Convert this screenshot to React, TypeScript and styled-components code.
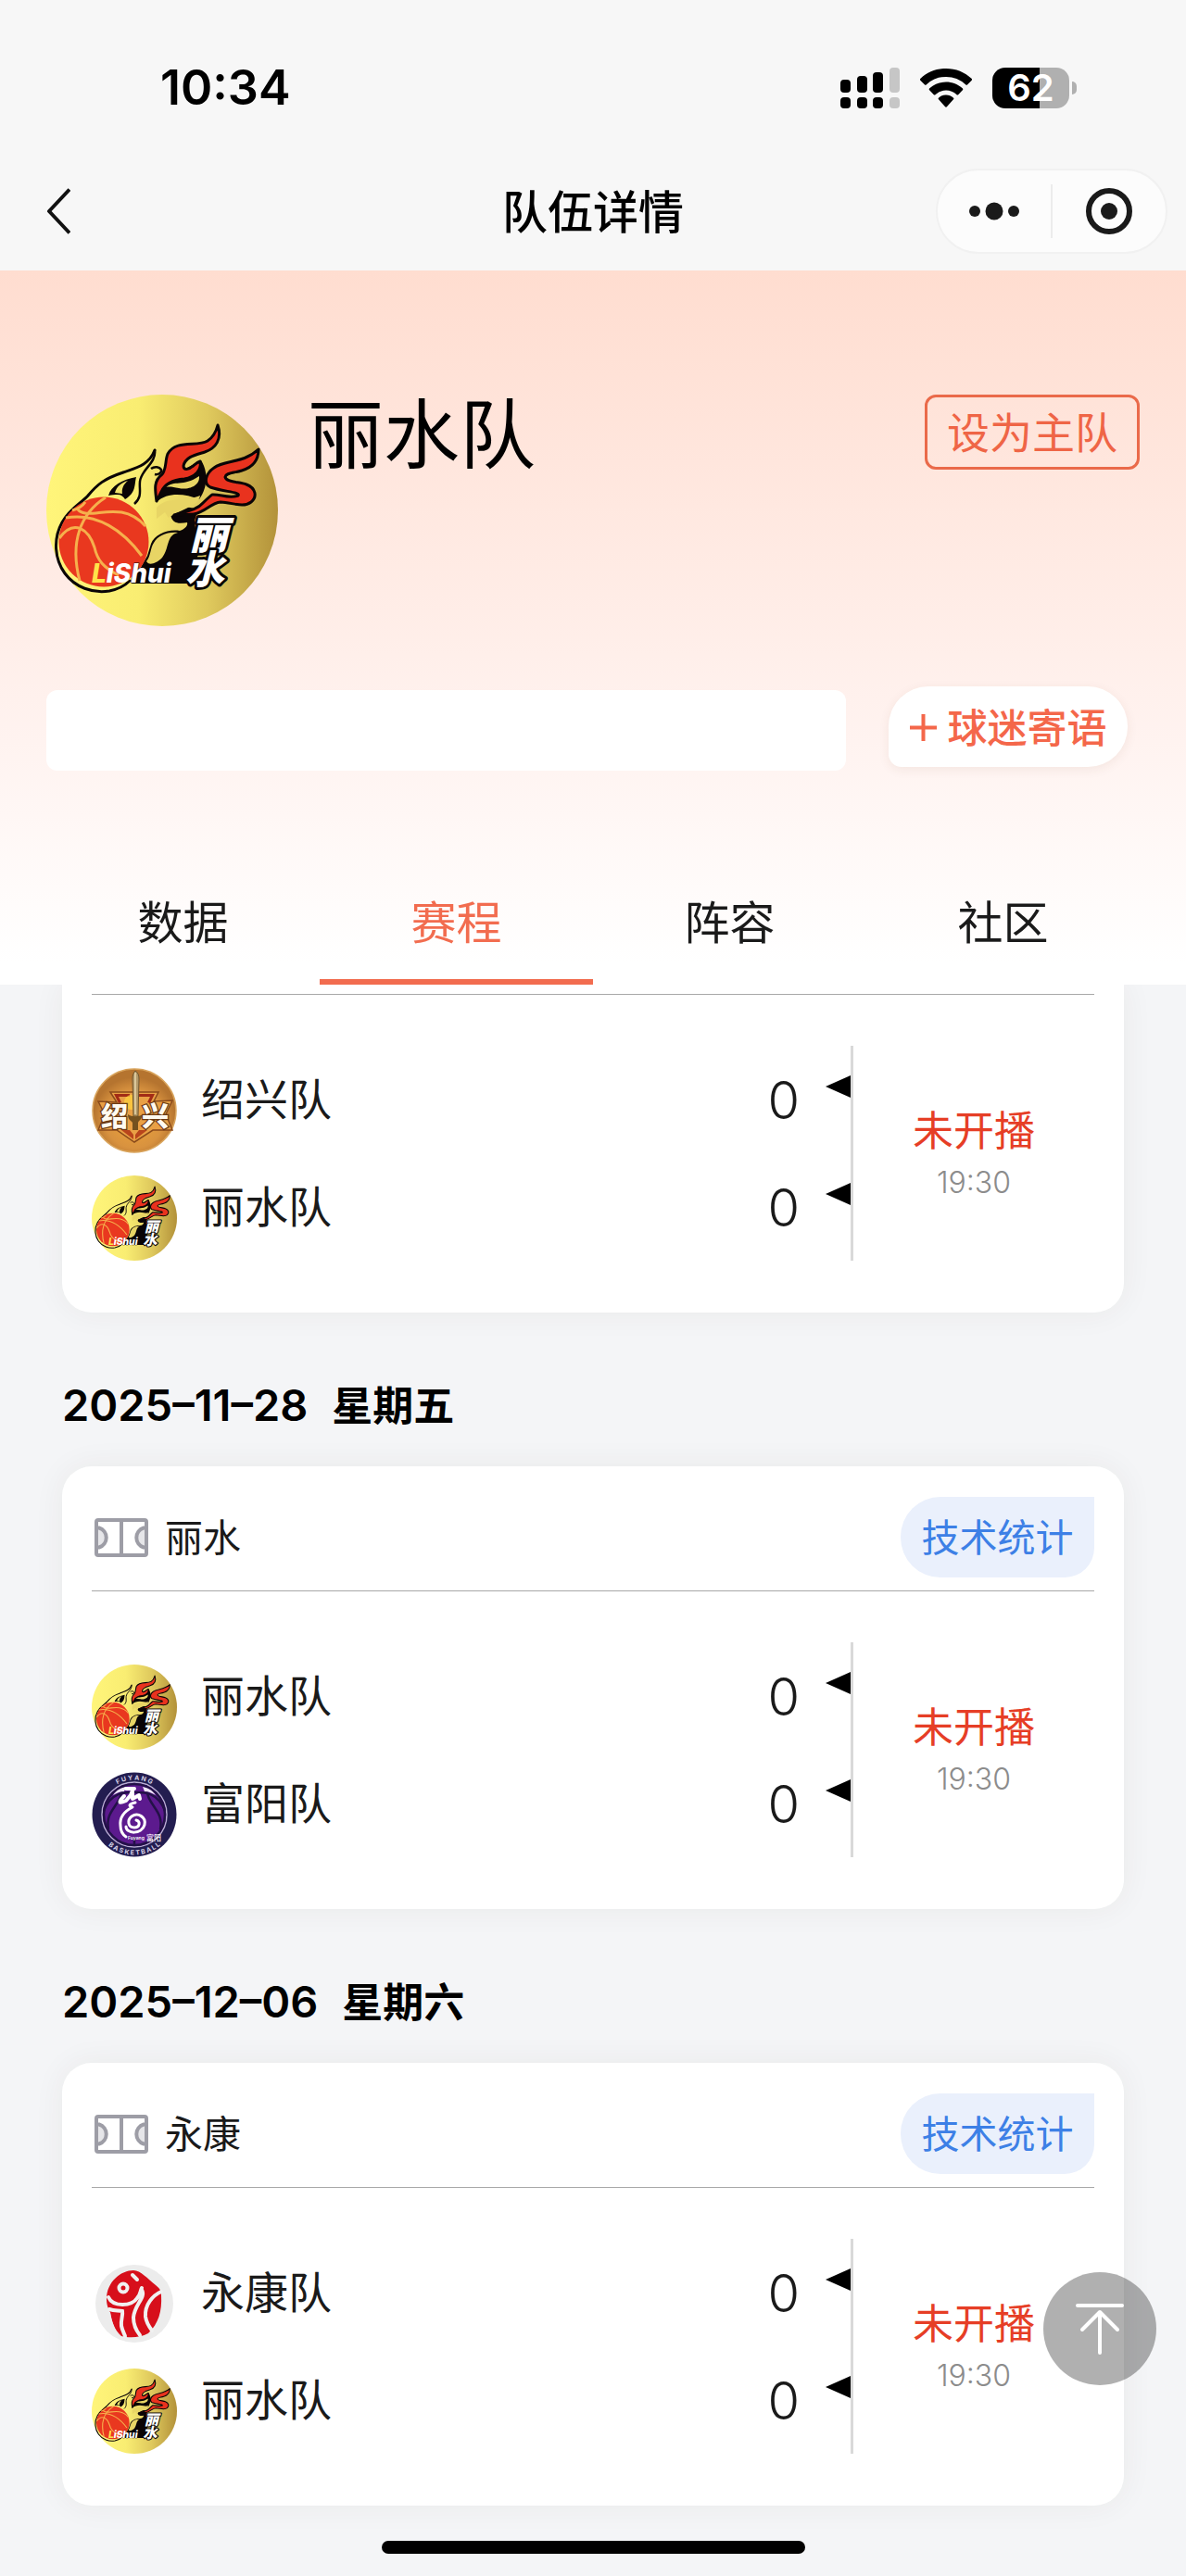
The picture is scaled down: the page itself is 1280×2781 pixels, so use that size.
import React, { useId } from "react";
import styled, { createGlobalStyle } from "styled-components";

const GlobalStyle = createGlobalStyle`
  * { box-sizing: border-box; }
  body {
    margin: 0;
    background: #f4f5f7;
    color: #1a1a1a;
    font-family: Inter, "Noto Sans CJK SC", "Liberation Sans", sans-serif;
  }
  button, input { font: inherit; color: inherit; border: 0; margin: 0; padding: 0; background: none; }
  button { cursor: pointer; }
  a { color: inherit; text-decoration: none; }
  h1, h2, p { margin: 0; }
  svg { display: block; }
`;

const Page = styled.div`
  display: flex;
  flex-direction: column;
  min-height: 100vh;
`;

/* ---------- status bar and title bar ---------- */

const TopChrome = styled.header`
  background: #f7f7f7;
`;

const StatusBar = styled.div`
  display: flex;
  align-items: center;
  justify-content: space-between;
  height: 164px;
  padding: 26px 118px 0 173px;
`;

const Clock = styled.time`
  font-size: 52px;
  line-height: 64px;
  font-weight: 600;
  color: #000;
`;

const StatusIcons = styled.div`
  display: flex;
  align-items: center;
`;

const WifiWrap = styled.div`
  margin: 0 22px;
`;

const Battery = styled.div`
  display: flex;
  align-items: center;
  gap: 3px;
`;

const BatteryBody = styled.div`
  display: flex;
  align-items: center;
  justify-content: center;
  width: 83px;
  height: 44px;
  border-radius: 14px;
  background: linear-gradient(90deg, #000 62%, #b0b0b0 62%);
  color: #fff;
  font-size: 40px;
  line-height: 44px;
  font-weight: 600;
`;

const BatteryNub = styled.div`
  width: 5px;
  height: 14px;
  border-radius: 0 5px 5px 0;
  background: #b0b0b0;
`;

const TitleBar = styled.div`
  display: grid;
  grid-template-columns: 1fr auto 1fr;
  align-items: center;
  height: 128px;
  padding: 0 20px;
`;

const BackButton = styled.button`
  justify-self: start;
  padding: 10px 30px;
`;

const Title = styled.h1`
  padding-top: 3px;
  font-size: 49px;
  line-height: 64px;
  font-weight: 500;
  color: #000;
`;

const Capsule = styled.div`
  justify-self: end;
  display: flex;
  align-items: center;
  width: 250px;
  height: 92px;
  border: 2px solid #f1f1f1;
  border-radius: 46px;
  background: #fcfcfc;
`;

const CapsuleButton = styled.button`
  flex: 1;
  display: flex;
  align-items: center;
  justify-content: center;
  height: 100%;
`;

const CapsuleDivider = styled.span`
  width: 2px;
  height: 58px;
  background: #ececec;
`;

/* ---------- team header ---------- */

const Hero = styled.section`
  padding: 134px 50px 0;
  background: linear-gradient(180deg, #ffddd0 0%, #fff3f0 66%, #ffffff 97%);
`;

const TeamRow = styled.div`
  display: flex;
  align-items: flex-start;
`;

const TeamName = styled.h2`
  flex: 1;
  margin-left: 32px;
  font-size: 82px;
  line-height: 88px;
  font-weight: 400;
  color: #000;
`;

const HomeTeamButton = styled.button`
  padding: 0 21px;
  height: 81px;
  border: 3px solid #ea6a4a;
  border-radius: 12px;
  color: #ef6546;
  font-size: 46px;
  line-height: 68px;
`;

const WishRow = styled.div`
  display: flex;
  align-items: flex-start;
  gap: 46px;
  margin-top: 65px;
  padding-right: 13px;
`;

const WishInput = styled.input`
  flex: 1;
  min-width: 0;
  height: 87px;
  margin-top: 4px;
  padding: 0 32px;
  border-radius: 12px;
  background: #fff;
  font-size: 41px;
  outline: none;
`;

const WishButton = styled.button`
  display: flex;
  align-items: center;
  justify-content: center;
  gap: 12px;
  width: 258px;
  height: 87px;
  padding-top: 2px;
  border-radius: 43px 43px 43px 14px;
  background: #fff;
  box-shadow: 0 3px 12px rgba(120, 60, 40, 0.08);
  color: #f4674a;
  font-size: 43px;
  line-height: 60px;
  font-weight: 500;
`;

const Tabs = styled.nav`
  display: flex;
  margin-top: 95px;
`;

const Tab = styled.a<{ $active: boolean }>`
  flex: 1;
  display: flex;
  align-items: center;
  justify-content: center;
  height: 136px;
  padding-top: 3px;
  font-size: 49px;
  line-height: 64px;
  color: ${(p) => (p.$active ? "#f26c4f" : "#1a1a1a")};
  box-shadow: ${(p) => (p.$active ? "inset 0 -6px 0 #f26c4f" : "none")};
`;

/* ---------- schedule ---------- */

const Schedule = styled.main`
  display: flex;
  flex-direction: column;
  padding: 0 67px;
`;

const DateHeading = styled.h2`
  display: flex;
  align-items: baseline;
  gap: 26px;
  height: 166px;
  padding-top: 68px;
  font-size: 44px;
  line-height: 64px;
  font-weight: 600;
  color: #000;
`;

const DateText = styled.span`
  font-size: 47px;
`;

const Card = styled.article<{ $cut?: boolean }>`
  padding: ${(p) => (p.$cut ? "10px 32px 0" : "33px 32px 0")};
  border-radius: ${(p) => (p.$cut ? "0 0 32px 32px" : "32px")};
  background: #fff;
  box-shadow: 0 0 34px rgba(60, 50, 40, 0.06);
  clip-path: ${(p) => (p.$cut ? "inset(0 -60px -60px)" : "none")};
`;

const CardHead = styled.div`
  display: flex;
  align-items: center;
  justify-content: space-between;
  padding-bottom: 14px;
`;

const Venue = styled.div`
  display: flex;
  align-items: center;
  gap: 18px;
  padding-left: 3px;
  font-size: 41px;
  line-height: 60px;
`;

const StatsLink = styled.a`
  display: flex;
  align-items: center;
  justify-content: center;
  width: 209px;
  height: 87px;
  border-radius: 43px 0 32px 43px;
  background: #eaf0fc;
  color: #3d80e6;
  font-size: 41px;
  line-height: 60px;
`;

const MatchBody = styled.div`
  display: flex;
  padding: 55px 0 56px;
  border-top: 1px solid #a8a8a8;
`;

const Teams = styled.div`
  flex: 1;
`;

const TeamLine = styled.div`
  display: flex;
  align-items: center;
  height: 116px;
`;

const LogoSlot = styled.div`
  align-self: flex-end;
`;

const Name = styled.span`
  flex: 1;
  margin-left: 26px;
  font-size: 47px;
  line-height: 60px;
`;

const Score = styled.span`
  padding-top: 2px;
  font-size: 56px;
  line-height: 64px;
  font-weight: 300;
`;

const Arrow = styled.span`
  align-self: flex-start;
  margin: 32px 0 0 28px;
  border: solid transparent;
  border-width: 12px 27px 12px 0;
  border-right-color: #000;
`;

const StatusColumn = styled.div`
  display: flex;
  flex-direction: column;
  align-items: center;
  justify-content: center;
  width: 263px;
  padding-top: 4px;
  border-left: 3px solid #d9d9d9;
`;

const LiveState = styled.span`
  font-size: 44px;
  line-height: 60px;
  color: #e63e26;
`;

const StartTime = styled.time`
  font-size: 32px;
  line-height: 52px;
  font-weight: 300;
  color: #8c8c8c;
`;

const BackToTop = styled.button`
  position: fixed;
  right: 32px;
  bottom: 206px;
  display: flex;
  align-items: center;
  justify-content: center;
  width: 122px;
  height: 122px;
  border-radius: 50%;
  background: rgba(0, 0, 0, 0.31);
`;

const HomeIndicator = styled.div`
  align-self: center;
  width: 457px;
  height: 14px;
  margin: 38px 0 24px;
  border-radius: 7px;
  background: #000;
`;

/* ---------- drawings ---------- */

const SignalIcon = () => (
  <svg width="64" height="44" viewBox="0 0 64 44" aria-hidden="true">
    {[
      [0, 13],
      [18, 9],
      [35, 5],
      [53, 0],
    ].map(([x, y], i) => (
      <g key={x} fill={i === 3 ? "#c6c6c6" : "#000"}>
        <rect x={x} y={y} width="11" height={27 - y} rx="4" />
        <rect x={x} y="32" width="11" height="12" rx="4" />
      </g>
    ))}
  </svg>
);

const WifiIcon = () => (
  <svg width="56" height="42" viewBox="0 0 56 42" aria-hidden="true">
    <path d="M28 0C38.500 0 48.500 4 55.500 10.800a1.500 1.500 0 0 1 0 2.200l-4.300 4.300a1.500 1.500 0 0 1-2.100 0A30.500 30.500 0 0 0 28 9 30.500 30.500 0 0 0 6.900 17.300a1.500 1.500 0 0 1-2.100 0L.5 13a1.500 1.500 0 0 1 0-2.200C7.500 4 17.500 0 28 0Z" />
    <path d="M28 14.500c6.700 0 13 2.500 17.700 6.800a1.500 1.500 0 0 1 0 2.200L41.400 28a1.500 1.500 0 0 1-2.100 0A16.800 16.800 0 0 0 28 23.500 16.800 16.800 0 0 0 16.700 28a1.500 1.500 0 0 1-2.100 0l-4.300-4.500a1.500 1.500 0 0 1 0-2.200A26.300 26.300 0 0 1 28 14.500Z" />
    <path d="M28 28.500c3 0 5.700 1 7.800 2.900a1.500 1.500 0 0 1 0 2.200l-6.700 7.500a1.500 1.500 0 0 1-2.200 0l-6.700-7.500a1.500 1.500 0 0 1 0-2.200A11.600 11.600 0 0 1 28 28.500Z" />
  </svg>
);

const ChevronIcon = () => (
  <svg width="26" height="50" viewBox="0 0 26 50" fill="none" stroke="#111" strokeWidth="4" aria-hidden="true">
    <path d="M25 1.500 3 25l22 23.500" strokeLinejoin="round" />
  </svg>
);

const DotsIcon = () => (
  <svg width="54" height="20" viewBox="0 0 54 20" fill="#1a1a1a" aria-hidden="true">
    <circle cx="6" cy="10" r="6" />
    <circle cx="27" cy="10" r="9.500" />
    <circle cx="48" cy="10" r="6" />
  </svg>
);

const TargetIcon = () => (
  <svg width="50" height="50" viewBox="0 0 50 50" aria-hidden="true">
    <circle cx="25" cy="25" r="22" fill="none" stroke="#1a1a1a" strokeWidth="6" />
    <circle cx="25" cy="25" r="9" fill="#1a1a1a" />
  </svg>
);

const PlusIcon = () => (
  <svg width="29" height="29" viewBox="0 0 29 29" stroke="currentColor" strokeWidth="4" aria-hidden="true">
    <path d="M14.500 0v29M0 14.500h29" />
  </svg>
);

const CourtIcon = () => (
  <svg width="58" height="42" viewBox="0 0 58 42" fill="none" stroke="#9d9da6" strokeWidth="4" aria-hidden="true">
    <path d="M2 10.500h3a11 11 0 0 1 0 21H2ZM56 10.500h-3a11 11 0 0 0 0 21h3Z" fill="#e6e6e9" />
    <rect x="2" y="2" width="54" height="38" rx="2" />
    <path d="M29 2v38" />
  </svg>
);

const TopArrowIcon = () => (
  <svg width="52" height="56" viewBox="0 0 52 56" fill="none" stroke="#fff" strokeWidth="4" strokeLinecap="round" strokeLinejoin="round" aria-hidden="true">
    <path d="M2 3h48M26 54V11M7 29l19-19 19 19" />
  </svg>
);

type LogoProps = { size: number };

const LishuiLogo = ({ size }: LogoProps) => {
  const id = useId();
  return (
    <svg width={size} height={size} viewBox="0 0 250 250" role="img" aria-label="丽水队队徽">
      <defs>
        <linearGradient id={id}>
          <stop offset="0" stopColor="#fff57a" />
          <stop offset="0.400" stopColor="#f9ed72" />
          <stop offset="0.700" stopColor="#dfc95d" />
          <stop offset="1" stopColor="#b3923a" />
        </linearGradient>
      </defs>
      <circle cx="125" cy="125" r="125" fill={`url(#${id})`} />
      <path d="M134 128c3-8 16-8 30-4l-4 12 4 34-6 34H92l17-30 4-13c4-10 18-16 31-14 6-2 9-6 8-9-7 1-17 3-18-10Z" fill="#0a0506" />
      <path d="M142 149c-13 3-9 17-17 27-8 8-15 8-17 4 5-6 4-14 8-20 5-8 14-12 26-11Z" fill="#e8d565" />
      <path d="M117 60c-6 16-20 19-34 24-21 7-28 13-38 25-8 9-19 13-28 29-10 18-8 40 3 55 11 15 30 22 48 19 10-2 17-6 22-11" fill="none" stroke="#0a0506" strokeWidth="3" strokeLinecap="round" />
      <path d="M117 60c2 14-15 21-16 34-1 9 3 16-6 24M113 80c4-3 9-2 11 1 1 3-3 6-7 5" fill="none" stroke="#0a0506" strokeWidth="2.500" />
      <path d="M67 109c3-11 15-17 30-20-2 8 0 17-12 24-2-3-4-5-8-5-4 0-6 0-10 1Z" fill="#0a0506" />
      <path d="M74 106c2-7 7-11 14-13-5 4-7 9-6 14Z" fill="#f1e36b" />
      <path d="M119 116c-1-17 5-24 12-26l36-19c8 12 7 30-2 42-16-6-34-8-46 3Z" fill="#0a0506" />
      <path d="M129 100c9-8 18 0 36-12 1 12-14 15-22 13-6-1-10-2-14-1Zm-10 22c12-13 28-5 47-13-2 12-20 14-34 24l-4-6-9 7Z" fill="#e8d565" />
      <g fill="#e9321e" stroke="#0a0506" strokeWidth="3" strokeLinejoin="round">
        <path d="M185 33c5 15-2 25-14 29-10 3-21 5-23 15 0 5 6 4 9 1 3-2 5-5 9-6 2 10-6 17-17 19-14 1-22 7-25 14l-5 10c-2-14-3-22 6-29 5-6 3-15 6-22 9-16 32-7 43-14 6-4 9-9 11-17Z" />
        <path d="M229 59c0 13-8 20-18 23-9 3-17 2-18 7 1 6 16 5 23 8 10 4 12 13 5 19-9 7-21 0-33 0-11 1-16 11-29 13-7 1-14 0-21 1 13-4 24-5 31-13 5-5 8-8 10-9 8-1 18 5 28 1 3-4-16-4-30-9-8-4-5-15 4-21 12-9 31-4 48-20Z" />
      </g>
      <circle cx="62" cy="159" r="48.500" fill="#e9381f" />
      <g fill="none" stroke="#f6b04c" strokeWidth="3">
        <path d="M14 155c16-22 32-9 38 10 3 14 10 22 26 30M64 111c-27 17-39 48-28 90M21 133c34-6 62 14 82 41M34 124c12 14 45-13 73 18M28 125c8-2 12-6 14-9" />
      </g>
      <text
        fontFamily='"Noto Sans CJK SC", sans-serif'
        fontWeight="900"
        fontSize="42"
        fontStyle="italic"
        fill="#fff"
        stroke="#0a0506"
        strokeWidth="6"
        strokeLinejoin="round"
        paintOrder="stroke"
      >
        <tspan x="154" y="167">丽</tspan>
        <tspan x="150" y="204">水</tspan>
      </text>
      <text x="49" y="203" fontSize="28" fontWeight="800" fontStyle="italic" fontFamily="Inter, sans-serif" fill="#fff" stroke="#0a0506" strokeWidth="1" paintOrder="stroke">
        <tspan fill="#ffe34a" stroke="none">L</tspan>
        <tspan stroke="none">iS</tspan>
        <tspan>hui</tspan>
      </text>
    </svg>
  );
};

const ShaoxingLogo = ({ size }: LogoProps) => {
  const id = useId();
  return (
    <svg width={size} height={size} viewBox="0 0 92 92" role="img" aria-label="绍兴队队徽">
      <defs>
        <radialGradient id={id} cx="0.500" cy="0.600">
          <stop offset="0" stopColor="#f0a63a" />
          <stop offset="0.700" stopColor="#d8923f" />
          <stop offset="1" stopColor="#b5742f" />
        </radialGradient>
      </defs>
      <circle cx="46" cy="46" r="45" fill={`url(#${id})`} stroke="#d9a45c" strokeWidth="1.500" />
      <path d="M20 26h52l-5 10 20-1-7 15 7 17H66L46 80 27 67H7l7-17-7-14 20 1Z" fill="#e9a045" stroke="#8a4a1b" strokeWidth="1.500" />
      <path d="M24 28h17v3H29l3 6-3 1ZM68 28H51v3h12l-3 6 3 1Z" fill="#a32c16" />
      <path d="M32 67h9l4 5v5ZM60 67h-9l-4 5v5Z" fill="#b9451c" />
      <circle cx="43" cy="37" r="8" fill="#ffd33d" opacity="0.700" />
      <path d="M44 12c0-4 1-7 3-9 3 2 4 5 4 9l-1 40h-5Z" fill="#b49a6a" stroke="#6f5630" strokeWidth="1" />
      <path d="M47 5v45" stroke="#e7d7ad" strokeWidth="1.500" />
      <path d="M39 50c4 3 12 3 16 0-1 6-4 6-5 9v8h-6v-8c-2-3-5-3-5-9Z" fill="#74511f" />
      <g fontFamily='"Noto Sans CJK SC", sans-serif' fontWeight="900" fontSize="29" fill="#fffaf0" stroke="#6b3a14" strokeWidth="2.500" paintOrder="stroke">
        <text x="10" y="63">绍</text>
        <text x="54" y="63">兴</text>
      </g>
    </svg>
  );
};

const FuyangLogo = ({ size }: LogoProps) => {
  const id = useId();
  return (
    <svg width={size} height={size} viewBox="0 0 92 92" role="img" aria-label="富阳队队徽">
      <defs>
        <path id={`${id}t`} d="M8.500 46a37.500 37.500 0 0 1 75 0" />
        <path id={`${id}b`} d="M2.500 46a43.500 43.500 0 0 0 87 0" />
      </defs>
      <circle cx="46" cy="46" r="45.500" fill="#231d50" />
      <circle cx="46" cy="46" r="35" fill="#5c1a8e" stroke="#b8aed2" strokeWidth="1.500" />
      <g fill="none" stroke="#231148" strokeWidth="2.500">
        <circle cx="46" cy="46" r="33" />
        <path d="M13 42c8-22 25-20 33-20s25-2 33 20M34 14c-2 24-20 26-16 48M58 14c2 24 20 26 16 48M46 70v10" />
      </g>
      <path d="M23 25c4-6 9-8 14-9l-2 5c-5 0-8 2-12 4ZM69 25c-4-6-9-8-14-9l2 5c5 0 8 2 12 4Z" fill="#efe6f7" />
      <g fill="none" stroke="#fff" strokeLinecap="round" strokeLinejoin="round">
        <path d="M37 18h9M35 26c-8 8-5 8 2 5l5-6 2-5v9l7-4 1 4" strokeWidth="4" />
        <path d="M47 33c-8 2-7 4-3 5-10 5-14 12-13 20 0 7 3 10 6 12M37 59c0 8 17 9 20-2 2-8-7-14-14-9-5 4-4 12 3 12 6 0 7-7 2-8" strokeWidth="3" />
      </g>
      <text x="39" y="73" fontSize="5" fontWeight="600" fill="#fff" fontFamily="Inter, sans-serif">Fuyang</text>
      <text x="59" y="74" fontSize="8" fontWeight="500" fill="#fff" fontFamily='"Noto Sans CJK SC", sans-serif'>富阳</text>
      <g fill="#d8d3e8" fontFamily="Inter, sans-serif" fontWeight="700" fontSize="7" textAnchor="middle">
        <text>
          <textPath href={`#${id}t`} startOffset="50%">F U Y A N G</textPath>
        </text>
        <text>
          <textPath href={`#${id}b`} startOffset="50%">B A S K E T B A L L</textPath>
        </text>
      </g>
    </svg>
  );
};

const YongkangLogo = ({ size }: LogoProps) => (
  <svg width={size} height={size} viewBox="0 0 92 92" role="img" aria-label="永康队队徽">
    <circle cx="46" cy="46" r="42" fill="#ececec" />
    <path d="M45 10c8 0 15 9 24 16 5 4 6 6 6 11 1 17-3 31-14 41-9 5-21 5-29 3-8-7-10-16-12-25-2-5-4-8-4-15C16 22 32 10 45 10Z" fill="#d70f1b" />
    <g fill="none" stroke="#f1f1f1" strokeWidth="4" strokeLinecap="round">
      <circle cx="34" cy="29" r="4.500" />
      <path d="M44 15l5 5M18 39c5 11 25 10 31 1 4-4 3-7 5-11M54 31c5 8-8 16-9 30 0 9 3 14 7 19M75 33c-9 4-18 14-17 27 1 7 4 11 7 15" />
      <path d="M19 52c6 2 9 1 14 2 1 5-2 10-1 16 1 5 3 8 4 11" />
    </g>
    <path d="M14 53l6 2c1 9 4 18 10 25-9-4-15-14-16-27Z" fill="#ececec" />
  </svg>
);

/* ---------- data ---------- */

const TEAMS = {
  lishui: { name: "丽水队", Logo: LishuiLogo },
  shaoxing: { name: "绍兴队", Logo: ShaoxingLogo },
  fuyang: { name: "富阳队", Logo: FuyangLogo },
  yongkang: { name: "永康队", Logo: YongkangLogo },
};

type TeamKey = keyof typeof TEAMS;

type Match = {
  date?: string;
  weekday?: string;
  venue?: string;
  time: string;
  sides: { team: TeamKey; score: number }[];
};

const MATCHES: Match[] = [
  {
    time: "19:30",
    sides: [
      { team: "shaoxing", score: 0 },
      { team: "lishui", score: 0 },
    ],
  },
  {
    date: "2025–11–28",
    weekday: "星期五",
    venue: "丽水",
    time: "19:30",
    sides: [
      { team: "lishui", score: 0 },
      { team: "fuyang", score: 0 },
    ],
  },
  {
    date: "2025–12–06",
    weekday: "星期六",
    venue: "永康",
    time: "19:30",
    sides: [
      { team: "yongkang", score: 0 },
      { team: "lishui", score: 0 },
    ],
  },
];

const TABS = ["数据", "赛程", "阵容", "社区"];

const MatchCard = ({ match }: { match: Match }) => (
  <>
    {match.date && (
      <DateHeading>
        <DateText>{match.date}</DateText>
        <span>{match.weekday}</span>
      </DateHeading>
    )}
    <Card $cut={!match.venue}>
      {match.venue && (
        <CardHead>
          <Venue>
            <CourtIcon />
            {match.venue}
          </Venue>
          <StatsLink href="#stats">技术统计</StatsLink>
        </CardHead>
      )}
      <MatchBody>
        <Teams>
          {match.sides.map(({ team, score }) => {
            const { name, Logo } = TEAMS[team];
            return (
              <TeamLine key={team}>
                <LogoSlot>
                  <Logo size={92} />
                </LogoSlot>
                <Name>{name}</Name>
                <Score>{score}</Score>
                <Arrow />
              </TeamLine>
            );
          })}
        </Teams>
        <StatusColumn>
          <LiveState>未开播</LiveState>
          <StartTime>{match.time}</StartTime>
        </StatusColumn>
      </MatchBody>
    </Card>
  </>
);

export default function App() {
  return (
    <Page>
      <GlobalStyle />
      <TopChrome>
        <StatusBar>
          <Clock>10:34</Clock>
          <StatusIcons>
            <SignalIcon />
            <WifiWrap>
              <WifiIcon />
            </WifiWrap>
            <Battery>
              <BatteryBody>62</BatteryBody>
              <BatteryNub />
            </Battery>
          </StatusIcons>
        </StatusBar>
        <TitleBar>
          <BackButton aria-label="返回">
            <ChevronIcon />
          </BackButton>
          <Title>队伍详情</Title>
          <Capsule>
            <CapsuleButton aria-label="更多">
              <DotsIcon />
            </CapsuleButton>
            <CapsuleDivider />
            <CapsuleButton aria-label="关闭">
              <TargetIcon />
            </CapsuleButton>
          </Capsule>
        </TitleBar>
      </TopChrome>

      <Hero>
        <TeamRow>
          <LishuiLogo size={250} />
          <TeamName>丽水队</TeamName>
          <HomeTeamButton>设为主队</HomeTeamButton>
        </TeamRow>
        <WishRow>
          <WishInput type="text" aria-label="球迷寄语" />
          <WishButton>
            <PlusIcon />
            球迷寄语
          </WishButton>
        </WishRow>
        <Tabs>
          {TABS.map((label) => (
            <Tab key={label} href={`#${label}`} $active={label === "赛程"}>
              {label}
            </Tab>
          ))}
        </Tabs>
      </Hero>

      <Schedule>
        {MATCHES.map((match) => (
          <MatchCard key={match.date ?? "first"} match={match} />
        ))}
      </Schedule>

      <HomeIndicator />
      <BackToTop aria-label="回到顶部">
        <TopArrowIcon />
      </BackToTop>
    </Page>
  );
}
